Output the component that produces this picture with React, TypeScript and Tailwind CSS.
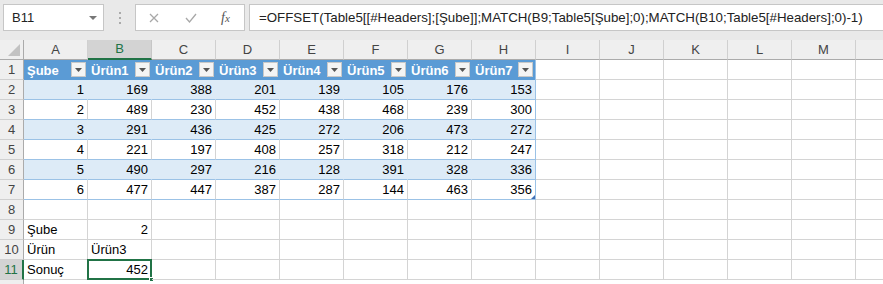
import React from "react";

const COLS = ["A", "B", "C", "D", "E", "F", "G", "H", "I", "J", "K", "L", "M", "N"];

const DATA = [
  [1, 169, 388, 201, 139, 105, 176, 153],
  [2, 489, 230, 452, 438, 468, 239, 300],
  [3, 291, 436, 425, 272, 206, 473, 272],
  [4, 221, 197, 408, 257, 318, 212, 247],
  [5, 490, 297, 216, 128, 391, 328, 336],
  [6, 477, 447, 387, 287, 144, 463, 356],
];

const HEADERS = ["Şube", "Ürün1", "Ürün2", "Ürün3", "Ürün4", "Ürün5", "Ürün6", "Ürün7"];

function FilterButton() {
  return (
    <span className="absolute right-[2px] top-[2px] flex h-[15px] w-[15px] items-center justify-center border border-[#c8c8c8] bg-[#f4f4f4]">
      <svg width="7" height="4" viewBox="0 0 7 4">
        <path d="M0 0h7L3.5 4z" fill="#555" />
      </svg>
    </span>
  );
}

function RowHeader({ n, active }: { n?: number; active?: boolean }) {
  return (
    <div
      className={
        "flex h-[20px] items-center justify-center border-b border-[#d0d0d0] text-[13px] " +
        (active
          ? "border-r-2 border-r-[#217346] bg-[#d3d3d3] text-[#217346]"
          : "border-r border-r-[#ababab] bg-[#efefef] text-[#444]")
      }
    >
      {n}
    </div>
  );
}

function Cell({
  children,
  right,
  className = "",
}: {
  children?: React.ReactNode;
  right?: boolean;
  className?: string;
}) {
  return (
    <div
      className={
        "relative flex h-[20px] items-center overflow-visible whitespace-nowrap px-[3px] pt-[1px] text-[13px] text-black " +
        (right ? "justify-end " : "") +
        className
      }
    >
      {children}
    </div>
  );
}

export default function App() {
  const formula =
    "=OFFSET(Table5[[#Headers];[Şube]];MATCH(B9;Table5[Şube];0);MATCH(B10;Table5[#Headers];0)-1)";

  return (
    <div className="h-[284px] w-[883px] overflow-hidden bg-white font-['Liberation_Sans',Arial,sans-serif]">
      {/* formula bar */}
      <div className="flex h-[40px] items-start bg-[#e9e9e9] pl-[3px] pt-[4px]">
        <div className="flex h-[27px] w-[101px] items-center justify-between border border-[#c6c6c6] bg-white pl-[8px] pr-[6px] text-[13px] text-[#222]">
          <span>B11</span>
          <svg width="8" height="4" viewBox="0 0 8 4">
            <path d="M0 0h8L4 4z" fill="#777" />
          </svg>
        </div>
        <div className="flex h-[27px] w-[31px] flex-col items-center justify-center gap-[3px]">
          <span className="h-[2px] w-[2px] bg-[#aaa]" />
          <span className="h-[2px] w-[2px] bg-[#aaa]" />
          <span className="h-[2px] w-[2px] bg-[#aaa]" />
        </div>
        <div className="flex h-[27px] w-[110px] items-center border border-[#c6c6c6] bg-white">
          <svg className="ml-[13px]" width="10" height="10" viewBox="0 0 10 10">
            <path d="M1 1l8 8M9 1l-8 8" stroke="#a8a8a8" strokeWidth="1.3" />
          </svg>
          <svg className="ml-[26px]" width="12" height="10" viewBox="0 0 12 10">
            <path d="M1 5l3.5 4L11 1" stroke="#a8a8a8" strokeWidth="1.3" fill="none" />
          </svg>
          <span className="ml-[24px] font-['Liberation_Serif',serif] text-[14px] italic text-[#555]">
            f<span className="text-[11px]">x</span>
          </span>
        </div>
        <div className="ml-[4px] flex h-[27px] flex-1 items-center overflow-hidden whitespace-nowrap border border-r-0 border-[#c6c6c6] bg-white pl-[9px] text-[13.3px] text-[#222]">
          {formula}
        </div>
      </div>

      {/* sheet */}
      <div className="grid grid-cols-[24px_repeat(14,64px)] auto-rows-[20px]">
        {/* corner */}
        <div className="relative h-[20px] border-b border-r border-[#ababab] bg-[#efefef]">
          <svg className="absolute bottom-[3px] right-[3px]" width="12" height="12" viewBox="0 0 12 12">
            <path d="M12 0v12H0z" fill="#c2c2c2" />
          </svg>
        </div>
        {COLS.map((c) => (
          <div
            key={c}
            className={
              "flex h-[20px] items-center justify-center border-r text-[13px] " +
              (c === "B"
                ? "border-b-2 border-b-[#217346] border-r-[#c6c6c6] bg-[#d3d3d3] text-[#217346]"
                : "border-b border-b-[#ababab] border-r-[#d0d0d0] bg-[#efefef] text-[#444]")
            }
          >
            {c === "N" ? null : c}
          </div>
        ))}

        {/* row 1: table headers */}
        <RowHeader n={1} />
        {HEADERS.map((h, i) => (
          <Cell
            key={h}
            className={
              "bg-[#5b9bd5] font-bold text-white " + (i === 7 ? "border-r border-[#9bc2e6]" : "")
            }
          >
            {h}
            <FilterButton />
          </Cell>
        ))}
        {COLS.slice(8).map((c) => (
          <Cell key={c} className="border-b border-r border-[#d4d4d4]" />
        ))}

        {/* rows 2-7 */}
        {DATA.map((row, r) => (
          <React.Fragment key={r}>
            <RowHeader n={r + 2} />
            {row.map((v, i) => (
              <Cell
                key={i}
                right
                className={
                  "border-b border-b-[#9bc2e6] border-r " +
                  (r % 2 === 0 ? "bg-[#ddebf7] " : "bg-white ") +
                  (i === 7
                    ? "border-r-[#9bc2e6]"
                    : r % 2 === 0
                      ? "border-r-[#ddebf7]"
                      : "border-r-[#d4d4d4]")
                }
              >
                {v}
                {r === 5 && i === 7 && (
                  <svg className="absolute bottom-[0px] right-[0px]" width="4" height="4" viewBox="0 0 4 4">
                    <path d="M4 0v4H0z" fill="#3f6fb5" />
                  </svg>
                )}
              </Cell>
            ))}
            {COLS.slice(8).map((c) => (
              <Cell key={c} className="border-b border-r border-[#d4d4d4]" />
            ))}
          </React.Fragment>
        ))}

        {/* rows 8-11 */}
        {[8, 9, 10, 11].map((n) => (
          <React.Fragment key={n}>
            <RowHeader n={n} active={n === 11} />
            {COLS.map((c) => {
              let content: React.ReactNode = null;
              let right = false;
              if (n === 9 && c === "A") content = "Şube";
              if (n === 9 && c === "B") {
                content = "2";
                right = true;
              }
              if (n === 10 && c === "A") content = "Ürün";
              if (n === 10 && c === "B") content = "Ürün3";
              if (n === 11 && c === "A") content = "Sonuç";
              if (n === 11 && c === "B") {
                content = "452";
                right = true;
              }
              const selected = n === 11 && c === "B";
              return (
                <Cell key={c} right={right} className="border-b border-r border-[#d4d4d4]">
                  {content}
                  {selected && (
                    <>
                      <span className="pointer-events-none absolute left-[-1px] top-[-1px] h-[21px] w-[65px] border-2 border-[#217346]" />
                      <span className="absolute bottom-[-3px] right-[-3px] h-[5px] w-[5px] border border-white bg-[#217346]" />
                    </>
                  )}
                </Cell>
              );
            })}
          </React.Fragment>
        ))}
        <RowHeader />
      </div>
    </div>
  );
}
